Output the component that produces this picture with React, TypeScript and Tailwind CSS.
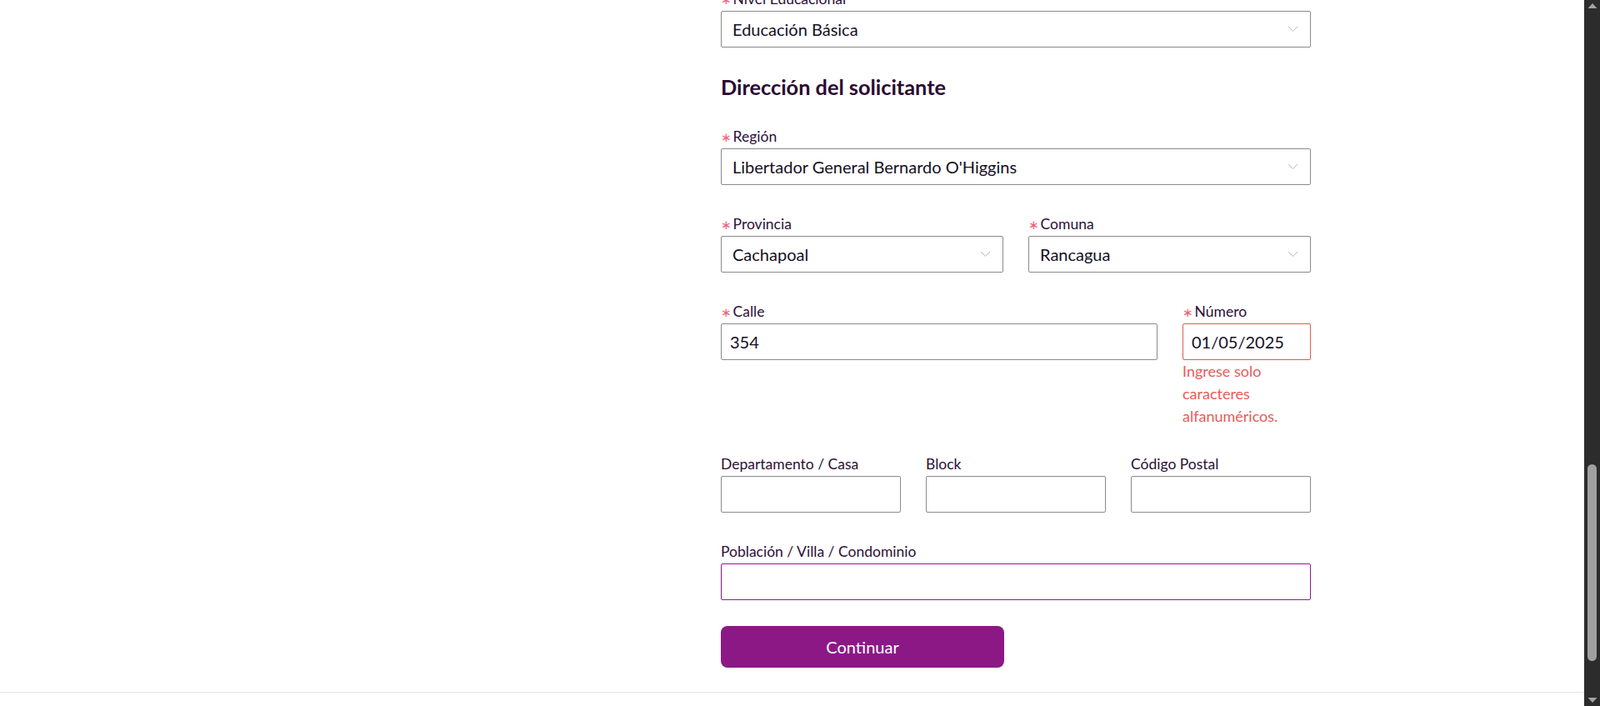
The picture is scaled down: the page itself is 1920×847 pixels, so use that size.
import React from "react";

type Tone = "default" | "error" | "focus";

function FieldLabel({ text, required = false }: { text: string; required?: boolean }) {
  return (
    <div className="mb-[2px] h-[25px] pt-px text-[17.5px] leading-6 text-[#2d0f38] whitespace-nowrap">
      {required && (
        <span
          className="mr-[2px] text-[15px] text-[#f2607c]"
          style={{ fontFamily: "'DejaVu Sans', sans-serif" }}
        >
          ∗
        </span>
      )}
      {text}
    </div>
  );
}

function Chevron() {
  return (
    <svg width="13" height="8" viewBox="0 0 13 8" fill="none" className="shrink-0">
      <polyline points="1,1 6.5,6.5 12,1" stroke="#b9b9b9" strokeWidth="1" />
    </svg>
  );
}

function SelectBox({ value }: { value: string }) {
  return (
    <div className="flex h-11 items-center justify-between rounded-[2px] border border-[#8a8a8a] bg-white pl-[13px] pr-[14px] text-[20px] text-[#15101f]">
      <span className="truncate">{value}</span>
      <Chevron />
    </div>
  );
}

function TextBox({ value = "", tone = "default" }: { value?: string; tone?: Tone }) {
  const border =
    tone === "error" ? "border-[#e55757]" : tone === "focus" ? "border-[#8e1a8c]" : "border-[#8a8a8a]";
  return (
    <input
      readOnly
      value={value}
      className={`block h-11 w-full rounded-[2px] border ${border} bg-white px-[10px] text-[20px] text-[#15101f] outline-none`}
    />
  );
}

function Scrollbar() {
  return (
    <div className="relative h-full w-[19px] shrink-0 bg-[#2c2c2c]">
      <svg width="11" height="6" viewBox="0 0 11 6" className="absolute left-1/2 top-[4px] -translate-x-1/2">
        <polygon points="0,6 5.5,0 11,6" fill="#a3a3a3" />
      </svg>
      <div className="absolute left-[4px] top-[557px] h-[236px] w-[11px] rounded-full bg-[#a0a0a0]" />
      <svg width="11" height="6" viewBox="0 0 11 6" className="absolute bottom-[4px] left-1/2 -translate-x-1/2">
        <polygon points="0,0 5.5,6 11,0" fill="#a3a3a3" />
      </svg>
    </div>
  );
}

export default function App() {
  return (
    <div
      className="flex h-[847px] w-full overflow-hidden bg-white"
      style={{ fontFamily: "Lato, 'Noto Sans', sans-serif" }}
    >
      <main className="flex h-full min-w-0 flex-1 flex-col">
        <div className="h-[831px] overflow-hidden border-b border-[#e6e6e6]">
          <form className="-mt-[14px] ml-[865px] flex w-[708px] flex-col">
            <div>
              <FieldLabel text="Nivel Educacional" required />
              <SelectBox value="Educación Básica" />
            </div>

            <h2 className="mt-[31px] mb-[31px] h-8 text-[25.3px] font-bold leading-8 text-[#2a0b30]">
              Dirección del solicitante
            </h2>

            <div className="mb-[34px]">
              <FieldLabel text="Región" required />
              <SelectBox value="Libertador General Bernardo O'Higgins" />
            </div>

            <div className="mb-[34px] grid grid-cols-2 gap-x-[30px]">
              <div>
                <FieldLabel text="Provincia" required />
                <SelectBox value="Cachapoal" />
              </div>
              <div>
                <FieldLabel text="Comuna" required />
                <SelectBox value="Rancagua" />
              </div>
            </div>

            <div className="mb-[31px] grid grid-cols-[1fr_154px] gap-x-[30px]">
              <div>
                <FieldLabel text="Calle" required />
                <TextBox value="354" />
              </div>
              <div>
                <FieldLabel text="Número" required />
                <TextBox value="01/05/2025" tone="error" />
                <p className="text-[18px] leading-[27px] text-[#ea5a5a]">
                  Ingrese solo caracteres alfanuméricos.
                </p>
              </div>
            </div>

            <div className="mb-[34px] grid grid-cols-3 gap-x-[30px]">
              <div>
                <FieldLabel text="Departamento / Casa" />
                <TextBox />
              </div>
              <div>
                <FieldLabel text="Block" />
                <TextBox />
              </div>
              <div>
                <FieldLabel text="Código Postal" />
                <TextBox />
              </div>
            </div>

            <div>
              <FieldLabel text="Población / Villa / Condominio" />
              <TextBox tone="focus" />
            </div>

            <button
              type="button"
              className="mt-[31px] h-[50px] w-[340px] rounded-[8px] bg-[#8c1886] text-[20px] text-white"
            >
              Continuar
            </button>
          </form>
        </div>
        <div className="flex-1 bg-white" />
      </main>
      <Scrollbar />
    </div>
  );
}
